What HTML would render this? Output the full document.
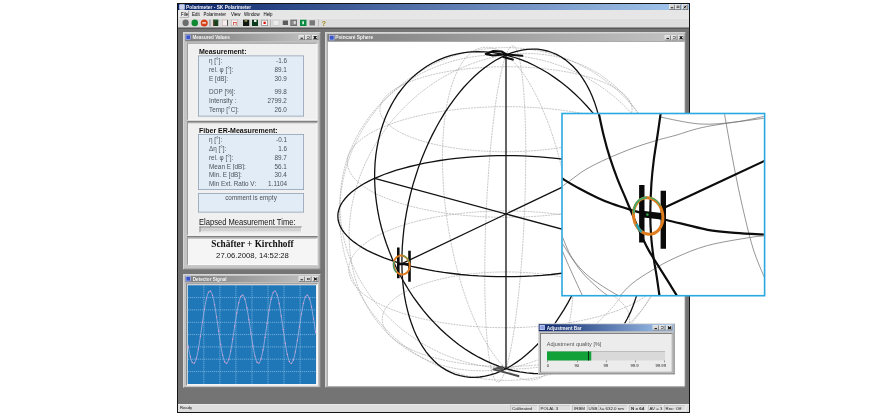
<!DOCTYPE html>
<html><head><meta charset="utf-8"><title>SK Polarimeter</title>
<style>
html,body{margin:0;padding:0;background:#fff;}
body{width:880px;height:420px;overflow:hidden;position:relative;font-family:"Liberation Sans",sans-serif;color:#222;}
#root{left:0;top:0;width:3520px;height:1680px;transform:scale(.25);transform-origin:0 0;filter:blur(1.2px);}
</style>
<style>
div{position:absolute;box-sizing:border-box;white-space:nowrap;}
svg{position:absolute;left:0;top:0;}
.win{background:#c4c4c4;border:3.2px solid #e2e2e2;border-right-color:#6c6c6c;border-bottom-color:#6c6c6c;}
.tb{height:28px;font-weight:bold;color:#f2f2f2;font-size:18.4px;line-height:28px;padding-left:36px;}
.tb.in{background:linear-gradient(90deg,#7d7d7d,#c4c4c4);}
.tb.ac{background:linear-gradient(90deg,#0b256b,#a5c9ef);}
.btn{top:4px;width:24px;height:20px;background:#d8d8d8;border:2px solid #f4f4f4;border-right-color:#444;border-bottom-color:#444;}
.btn::after{content:"";position:absolute;left:4.8px;top:3.2px;width:10.4px;height:8.8px;border:2.8px solid #222;box-sizing:border-box;}
.btn.mn::after{border:none;border-bottom:4px solid #222;top:6.4px;height:6.4px;}
.btn.cl::after{border:none;background:linear-gradient(45deg,transparent 35%,#222 36%,#222 64%,transparent 65%),linear-gradient(-45deg,transparent 35%,#222 36%,#222 64%,transparent 65%);width:12.8px;height:12px;left:3.6px;top:2px;}
.ico{left:8px;top:4px;width:20px;height:20px;background:#3b55c8;border:2px solid #dfe6ff;}
.panel{background:#f0f0f0;border:4px solid #9c9c9c;border-right-color:#fafafa;border-bottom-color:#fafafa;}
.box{background:#e2ecf6;border:3.2px solid #8d9db0;}
.h{font-weight:bold;font-size:32px;line-height:36px;color:#111;transform:scaleX(.875);transform-origin:0 50%;}
.r{left:836px;width:312px;height:36px;font-size:29.6px;line-height:36px;color:#4a5058;}
.r b{font-weight:normal;position:absolute;left:0;top:0;transform:scaleX(.86);transform-origin:0 50%;}
.r i{font-style:normal;position:absolute;right:0;top:0;transform:scaleX(.86);transform-origin:100% 50%;}
.m{top:42px;height:32px;font-size:18.8px;line-height:32px;color:#000;transform:scaleX(.94);transform-origin:0 50%;}
.t{top:76px;width:32px;height:32px;}
.s{top:1620px;height:24px;font-size:17.6px;line-height:24px;color:#1c1c1c;border:2px solid #b0b0b0;border-right-color:#fafafa;border-bottom-color:#fafafa;padding-left:4px;}
</style></head><body>
<!--ROOT--><div id="root">
<!-- main application window -->
<div style="left:708px;top:12px;width:2052px;height:1640px;background:#747474;border:4px solid #141414;"></div>
<div class="tb ac" style="left:712px;top:16px;width:2044px;height:24px;line-height:24px;font-size:19.2px;padding-left:32px;">Polarimeter - SK Polarimeter
 <div class="ico" style="left:6px;top:2px;width:20px;height:20px;background:#c8d0ee;"></div>
 <div class="btn mn" style="left:1964px;top:2px;"></div><div class="btn" style="left:1988px;top:2px;"></div><div class="btn cl" style="left:2016px;top:2px;"></div>
</div>
<div style="left:712px;top:40px;width:2044px;height:32px;background:#e6e6e6;"></div>
<div style="left:718.4px;top:41.6px;width:36px;height:28px;border:2px solid #f8f8f8;border-right-color:#666;border-bottom-color:#888;"></div><div class="m" style="left:724px;">File</div>
<div class="m" style="left:768px;">Edit</div>
<div class="m" style="left:814px;">Polarimeter</div>
<div class="m" style="left:924px;">View</div>
<div class="m" style="left:976px;">Window</div>
<div class="m" style="left:1054px;">Help</div>
<div style="left:712px;top:72px;width:2044px;height:40px;background:#dcdcdc;border-top:2px solid #f6f6f6;"></div>
<!-- toolbar icons -->
<div class="t" style="left:729.6px;top:78.4px;width:25.6px;height:25.6px;border-radius:50%;background:#6c6c6c;"></div>
<div class="t" style="left:766px;top:78.4px;width:26.4px;height:26.4px;border-radius:50%;background:#0f8a30;"></div>
<div class="t" style="left:802.8px;top:77.6px;width:28px;height:28px;border-radius:50%;background:#d8401c;"><div style="left:6.4px;top:10.4px;width:15.2px;height:7.2px;background:#f3c9b8;"></div></div>
<div style="left:838.4px;top:78px;width:3.2px;height:28px;background:#8a8a8a;"></div>
<div class="t" style="left:852px;top:79.2px;width:20.8px;height:24.8px;background:#17401f;border-left:5.2px solid #6a4a2a;border-top:4px solid #1e6a30;"></div>
<div class="t" style="left:888px;top:79.2px;width:24px;height:24.8px;background:#f6eeee;border:2.4px solid #b9a0a0;border-right:4px solid #555;"></div>
<div class="t" style="left:924.8px;top:79.2px;width:27.2px;height:24.8px;background:#f6f0f0;border:2.4px solid #b0a0a0;"><div style="left:4.8px;top:6.4px;width:14.4px;height:12px;border:3.2px solid #cc4030;border-bottom:none;"></div></div>
<div class="t" style="left:972px;top:79.2px;width:24.8px;height:24.8px;background:#10180f;"><div style="left:6.4px;top:0;width:10.4px;height:8px;background:#8a8a50;"></div></div>
<div class="t" style="left:1008px;top:79.2px;width:24px;height:24.8px;background:#0c3a1c;"><div style="left:8px;top:0;width:10.4px;height:8.8px;background:#e6efe6;"></div></div>
<div class="t" style="left:1045.2px;top:79.2px;width:26.4px;height:24.8px;background:#f8f2f2;border:3.6px solid #8a8a8a;"><div style="left:5.6px;top:4.8px;width:8.8px;height:8.8px;background:#e01010;"></div></div>
<div style="left:1081.2px;top:78px;width:2.8px;height:28px;background:#a6a6a6;"></div>
<div class="t" style="left:1091.2px;top:79.2px;width:25.6px;height:24px;background:#ececec;border:2.4px solid #b4b4b4;"></div>
<div class="t" style="left:1130.8px;top:82.4px;width:20.8px;height:17.6px;background:#5c5c5c;"></div>
<div class="t" style="left:1162.4px;top:79.2px;width:25.6px;height:24.8px;background:#8e8e8e;border:3.2px solid #6a6a6a;"><div style="left:9.6px;top:2.4px;width:8px;height:10.4px;background:#e6e6e6;"></div></div>
<div class="t" style="left:1200px;top:79.2px;width:26px;height:24.8px;background:#0a8a40;"><div style="left:8.8px;top:6px;width:7.2px;height:12px;background:#d4efdc;"></div></div>
<div class="t" style="left:1238.4px;top:80.8px;width:22px;height:20.8px;background:#777;"></div>
<div style="left:1272.8px;top:78px;width:2.8px;height:28px;background:#b0b0b0;"></div>
<div class="t" style="left:1286.4px;top:74.4px;width:20px;font-size:29.6px;line-height:36px;font-weight:bold;color:#a08c14;">?</div>
<div style="left:712px;top:110px;width:2044px;height:4.8px;background:#4e4e4e;"></div>
<!-- status bar -->
<div style="left:712px;top:1616px;width:2044px;height:32px;background:#dedede;border-top:2px solid #f8f8f8;"></div>
<div style="left:720px;top:1620px;font-size:16.8px;line-height:24px;color:#222;">Ready</div>
<div class="s" style="left:2042px;width:108px;">Calibrated</div>
<div class="s" style="left:2156px;width:128px;">POLAL 3</div>
<div class="s" style="left:2290px;width:52px;">IRBM</div>
<div class="s" style="left:2348px;width:40px;">USB</div>
<div class="s" style="left:2392px;width:120px;">λ= 632.0 nm</div>
<div class="s" style="left:2518px;width:68px;font-weight:bold;">N = 64</div>
<div class="s" style="left:2592px;width:60px;">AV = 3</div>
<div class="s" style="left:2656px;width:88px;">Rec: Off</div>

<!-- Measured Values window -->
<div class="win" style="left:732.8px;top:128.8px;width:549.6px;height:949.2px;"></div>
<div class="tb in" style="left:740.8px;top:136.4px;width:533.6px;height:28.4px;line-height:29.2px;padding-left:28.8px;">Measured Values
 <div class="ico" style="top:2.4px;left:2.4px;"></div>
 <div class="btn mn" style="left:454px;top:4px;"></div><div class="btn" style="left:480px;top:4px;"></div><div class="btn cl" style="left:508px;top:4px;"></div>
</div>
<div style="left:748px;top:170.8px;width:522.4px;height:891.2px;background:#808080;"></div>
<div class="panel" style="left:748px;top:170.8px;width:521.6px;height:310.8px;"></div>
<div class="panel" style="left:748px;top:488.8px;width:521.6px;height:454.4px;"></div>
<div class="panel" style="left:748px;top:950.4px;width:521.6px;height:110.4px;background:#f5f5f5;"></div>

<div class="h" style="left:796px;top:187.6px;">Measurement:</div>
<div class="box" style="left:792px;top:222px;width:424px;height:244px;"></div>
<div class="r" style="top:224.4px;"><b>η [°]:</b><i>-1.6</i></div>
<div class="r" style="top:260.8px;"><b>rel. φ [°]:</b><i>89.1</i></div>
<div class="r" style="top:296px;"><b>E [dB]:</b><i>30.9</i></div>
<div class="r" style="top:348.8px;"><b>DOP [%]:</b><i>99.8</i></div>
<div class="r" style="top:384.4px;"><b>Intensity :</b><i>2799.2</i></div>
<div class="r" style="top:420.4px;"><b>Temp [°C]:</b><i>26.0</i></div>

<div class="h" style="left:796px;top:503.6px;">Fiber ER-Measurement:</div>
<div class="box" style="left:792px;top:535.6px;width:424px;height:224.4px;"></div>
<div class="r" style="top:540.8px;"><b>η [°]:</b><i>-0.1</i></div>
<div class="r" style="top:575.6px;"><b>Δη [°]:</b><i>1.6</i></div>
<div class="r" style="top:610.8px;"><b>rel. φ [°]:</b><i>89.7</i></div>
<div class="r" style="top:645.6px;"><b>Mean E [dB]:</b><i>56.1</i></div>
<div class="r" style="top:680.8px;"><b>Min. E [dB]:</b><i>30.4</i></div>
<div class="r" style="top:715.6px;"><b>Min Ext. Ratio V:</b><i>1.1104</i></div>
<div class="box" style="left:792px;top:772px;width:424px;height:78px;"></div>
<div style="left:792px;top:771.2px;width:424px;text-align:center;font-size:29.6px;line-height:36px;color:#4a5058;transform:scaleX(.86);">comment is empty</div>
<div style="left:796px;top:869.2px;font-size:32.8px;line-height:36px;color:#111;transform:scaleX(.925);transform-origin:0 50%;">Elapsed Measurement Time:</div>
<div style="left:798px;top:906px;width:410px;height:24px;background:#d2d2d2;border:4px solid #8c8c8c;border-right-color:#f4f4f4;border-bottom-color:#f4f4f4;"></div>
<div style="left:752px;top:954.8px;width:516px;text-align:center;font-family:'Liberation Serif',serif;font-weight:bold;font-size:37.2px;line-height:44px;color:#111;">Schäfter + Kirchhoff</div>
<div style="left:752px;top:1004px;width:516px;text-align:center;font-size:30.8px;line-height:36px;color:#161616;">27.06.2008, 14:52:28</div>

<!-- Detector Signal window -->
<div class="win" style="left:732.8px;top:1096.8px;width:549.6px;height:455.2px;"></div>
<div class="tb in" style="left:740.8px;top:1104px;width:533.6px;height:25.2px;line-height:26px;padding-left:30.4px;">Detector Signal
 <div class="ico" style="top:1.2px;left:2.4px;"></div>
 <div class="btn mn" style="left:454px;top:2.4px;"></div><div class="btn" style="left:480px;top:2.4px;"></div><div class="btn cl" style="left:508px;top:2.4px;"></div>
</div>
<div style="left:744.8px;top:1134.4px;width:526.4px;height:408px;background:#f0f0f0;border:3.6px solid #6e6e6e;border-right-color:#fff;border-bottom-color:#fff;"></div>
<div style="left:751.2px;top:1141.2px;width:513.2px;height:394.4px;background:#1f77b8;"></div>

<!-- Poincare Sphere window -->
<div class="win" style="left:1300.8px;top:128.8px;width:1440.8px;height:1421.6px;"></div>
<div class="tb in" style="left:1308.8px;top:136px;width:1428.8px;height:28.8px;line-height:30.4px;font-size:19.2px;padding-left:32px;">Poincaré Sphere
 <div class="ico" style="top:4.8px;left:8px;"></div>
 <div class="btn mn" style="left:1350px;top:4.8px;"></div><div class="btn" style="left:1376px;top:4.8px;"></div><div class="btn cl" style="left:1404px;top:4.8px;"></div>
</div>
<div style="left:1309.6px;top:165.6px;width:1428.4px;height:1378.4px;background:#fff;border-left:2.4px solid #777;border-top:2.4px solid #777;"></div>

<svg width="3520" height="1680" viewBox="0 0 880 420">
<defs>
<clipPath id="pc"><rect x="328.5" y="42.5" width="356" height="343.5"/></clipPath>
<clipPath id="ic"><rect x="562.8" y="114.3" width="201" height="180.6"/></clipPath>
</defs>
<!-- detector grid + wave -->
<path d="M203.8 285.3 V383.9" stroke="#a4d0ee" stroke-width="0.7" stroke-dasharray="1 1"/><path d="M187.8 297.6 H316.1" stroke="#a4d0ee" stroke-width="0.7" stroke-dasharray="1 1"/><path d="M219.9 285.3 V383.9" stroke="#a4d0ee" stroke-width="0.7" stroke-dasharray="1 1"/><path d="M187.8 309.9 H316.1" stroke="#a4d0ee" stroke-width="0.7" stroke-dasharray="1 1"/><path d="M235.9 285.3 V383.9" stroke="#a4d0ee" stroke-width="0.7" stroke-dasharray="1 1"/><path d="M187.8 322.3 H316.1" stroke="#a4d0ee" stroke-width="0.7" stroke-dasharray="1 1"/><path d="M252.0 285.3 V383.9" stroke="#a4d0ee" stroke-width="0.7" stroke-dasharray="1 1"/><path d="M187.8 334.6 H316.1" stroke="#a4d0ee" stroke-width="0.7" stroke-dasharray="1 1"/><path d="M268.0 285.3 V383.9" stroke="#a4d0ee" stroke-width="0.7" stroke-dasharray="1 1"/><path d="M187.8 346.9 H316.1" stroke="#a4d0ee" stroke-width="0.7" stroke-dasharray="1 1"/><path d="M284.0 285.3 V383.9" stroke="#a4d0ee" stroke-width="0.7" stroke-dasharray="1 1"/><path d="M187.8 359.2 H316.1" stroke="#a4d0ee" stroke-width="0.7" stroke-dasharray="1 1"/><path d="M300.1 285.3 V383.9" stroke="#a4d0ee" stroke-width="0.7" stroke-dasharray="1 1"/><path d="M187.8 371.6 H316.1" stroke="#a4d0ee" stroke-width="0.7" stroke-dasharray="1 1"/>
<path d="M187.8 343.8 L188.3 346.8 L188.8 349.6 L189.3 352.2 L189.8 354.5 L190.3 356.7 L190.8 358.5 L191.3 360.1 L191.8 361.4 L192.3 362.4 L192.8 363.0 L193.3 363.4 L193.8 363.4 L194.3 363.0 L194.8 362.4 L195.3 361.4 L195.8 360.1 L196.3 358.5 L196.8 356.6 L197.3 354.5 L197.8 352.1 L198.3 349.4 L198.8 346.6 L199.3 343.6 L199.8 340.4 L200.3 337.1 L200.8 333.7 L201.3 330.3 L201.8 326.8 L202.3 323.3 L202.8 319.9 L203.3 316.5 L203.8 313.2 L204.3 310.1 L204.8 307.1 L205.3 304.3 L205.8 301.7 L206.3 299.4 L206.8 297.3 L207.3 295.4 L207.8 293.9 L208.3 292.7 L208.8 291.8 L209.3 291.2 L209.8 291.0 L210.3 291.1 L210.8 291.5 L211.3 292.3 L211.8 293.4 L212.3 294.8 L212.8 296.5 L213.3 298.5 L213.8 300.7 L214.3 303.2 L214.8 306.0 L215.3 308.9 L215.8 312.0 L216.3 315.2 L216.8 318.5 L217.3 321.9 L217.8 325.4 L218.3 328.9 L218.8 332.3 L219.3 335.8 L219.8 339.1 L220.3 342.3 L220.8 345.4 L221.3 348.3 L221.8 351.0 L222.3 353.5 L222.8 355.8 L223.3 357.8 L223.8 359.5 L224.3 360.9 L224.8 362.0 L225.3 362.8 L225.8 363.3 L226.3 363.4 L226.8 363.2 L227.3 362.7 L227.8 361.8 L228.3 360.7 L228.8 359.2 L229.3 357.4 L229.8 355.4 L230.3 353.1 L230.8 350.6 L231.3 347.9 L231.8 345.0 L232.3 342.0 L232.8 338.8 L233.3 335.6 L233.8 332.3 L234.3 328.9 L234.8 325.6 L235.3 322.3 L235.8 319.1 L236.3 315.9 L236.8 312.9 L237.3 310.1 L237.8 307.4 L238.3 304.9 L238.8 302.7 L239.3 300.7 L239.8 299.0 L240.3 297.6 L240.8 296.5 L241.3 295.7 L241.8 295.2 L242.3 295.0 L242.8 295.2 L243.3 295.7 L243.8 296.5 L244.3 297.6 L244.8 299.0 L245.3 300.7 L245.8 302.7 L246.3 304.9 L246.8 307.4 L247.3 310.1 L247.8 312.9 L248.3 315.9 L248.8 319.1 L249.3 322.3 L249.8 325.6 L250.3 328.9 L250.8 332.3 L251.3 335.6 L251.8 338.8 L252.3 342.0 L252.8 345.0 L253.3 347.9 L253.8 350.6 L254.3 353.1 L254.8 355.4 L255.3 357.4 L255.8 359.2 L256.3 360.7 L256.8 361.8 L257.3 362.7 L257.8 363.2 L258.3 363.4 L258.8 363.3 L259.3 362.8 L259.8 362.0 L260.3 360.9 L260.8 359.5 L261.3 357.8 L261.8 355.8 L262.3 353.5 L262.8 351.0 L263.3 348.3 L263.8 345.4 L264.3 342.3 L264.8 339.1 L265.3 335.8 L265.8 332.3 L266.3 328.9 L266.8 325.4 L267.3 321.9 L267.8 318.5 L268.3 315.2 L268.8 312.0 L269.3 308.9 L269.8 306.0 L270.3 303.2 L270.8 300.7 L271.3 298.5 L271.8 296.5 L272.3 294.8 L272.8 293.4 L273.3 292.3 L273.8 291.5 L274.3 291.1 L274.8 291.0 L275.3 291.2 L275.8 291.8 L276.3 292.7 L276.8 293.9 L277.3 295.4 L277.8 297.3 L278.3 299.4 L278.8 301.7 L279.3 304.3 L279.8 307.1 L280.3 310.1 L280.8 313.2 L281.3 316.5 L281.8 319.9 L282.3 323.3 L282.8 326.8 L283.3 330.3 L283.8 333.7 L284.3 337.1 L284.8 340.4 L285.3 343.6 L285.8 346.6 L286.3 349.4 L286.8 352.1 L287.3 354.5 L287.8 356.6 L288.3 358.5 L288.8 360.1 L289.3 361.4 L289.8 362.4 L290.3 363.0 L290.8 363.4 L291.3 363.4 L291.8 363.0 L292.3 362.4 L292.8 361.4 L293.3 360.1 L293.8 358.5 L294.3 356.7 L294.8 354.5 L295.3 352.2 L295.8 349.6 L296.3 346.8 L296.8 343.8 L297.3 340.8 L297.8 337.6 L298.3 334.3 L298.8 331.0 L299.3 327.6 L299.8 324.3 L300.3 321.0 L300.8 317.8 L301.3 314.7 L301.8 311.8 L302.3 309.0 L302.8 306.4 L303.3 304.0 L303.8 301.9 L304.3 300.0 L304.8 298.4 L305.3 297.1 L305.8 296.1 L306.3 295.4 L306.8 295.1 L307.3 295.0 L307.8 295.3 L308.3 295.9 L308.8 296.9 L309.3 298.1 L309.8 299.6 L310.3 301.5 L310.8 303.6 L311.3 305.9 L311.8 308.4 L312.3 311.2 L312.8 314.1 L313.3 317.2 L313.8 320.4 L314.3 323.6 L314.8 326.9 L315.3 330.3 L315.8 333.6" fill="none" stroke="#a9b2e2" stroke-width="0.8"/>
<circle cx="188.3" cy="346.8" r="0.7" fill="#e79ad0"/><circle cx="190.3" cy="356.7" r="0.7" fill="#e79ad0"/><circle cx="192.3" cy="362.4" r="0.7" fill="#e79ad0"/><circle cx="194.4" cy="363.0" r="0.7" fill="#e79ad0"/><circle cx="196.4" cy="358.2" r="0.7" fill="#e79ad0"/><circle cx="198.4" cy="348.9" r="0.7" fill="#e79ad0"/><circle cx="200.4" cy="336.3" r="0.7" fill="#e79ad0"/><circle cx="202.4" cy="322.3" r="0.7" fill="#e79ad0"/><circle cx="204.5" cy="309.1" r="0.7" fill="#e79ad0"/><circle cx="206.5" cy="298.6" r="0.7" fill="#e79ad0"/><circle cx="208.5" cy="292.3" r="0.7" fill="#e79ad0"/><circle cx="210.5" cy="291.3" r="0.7" fill="#e79ad0"/><circle cx="212.5" cy="295.6" r="0.7" fill="#e79ad0"/><circle cx="214.6" cy="304.6" r="0.7" fill="#e79ad0"/><circle cx="216.6" cy="317.0" r="0.7" fill="#e79ad0"/><circle cx="218.6" cy="331.0" r="0.7" fill="#e79ad0"/><circle cx="220.6" cy="344.3" r="0.7" fill="#e79ad0"/><circle cx="222.6" cy="355.1" r="0.7" fill="#e79ad0"/><circle cx="224.7" cy="361.8" r="0.7" fill="#e79ad0"/><circle cx="226.7" cy="363.3" r="0.7" fill="#e79ad0"/><circle cx="228.7" cy="359.5" r="0.7" fill="#e79ad0"/><circle cx="230.7" cy="351.1" r="0.7" fill="#e79ad0"/><circle cx="232.7" cy="339.2" r="0.7" fill="#e79ad0"/><circle cx="234.8" cy="325.9" r="0.7" fill="#e79ad0"/><circle cx="236.8" cy="313.0" r="0.7" fill="#e79ad0"/><circle cx="238.8" cy="302.7" r="0.7" fill="#e79ad0"/><circle cx="240.8" cy="296.4" r="0.7" fill="#e79ad0"/><circle cx="242.8" cy="295.2" r="0.7" fill="#e79ad0"/><circle cx="244.9" cy="299.2" r="0.7" fill="#e79ad0"/><circle cx="246.9" cy="307.8" r="0.7" fill="#e79ad0"/><circle cx="248.9" cy="319.7" r="0.7" fill="#e79ad0"/><circle cx="250.9" cy="333.1" r="0.7" fill="#e79ad0"/><circle cx="252.9" cy="345.9" r="0.7" fill="#e79ad0"/><circle cx="255.0" cy="356.1" r="0.7" fill="#e79ad0"/><circle cx="257.0" cy="362.2" r="0.7" fill="#e79ad0"/><circle cx="259.0" cy="363.1" r="0.7" fill="#e79ad0"/><circle cx="261.0" cy="358.8" r="0.7" fill="#e79ad0"/><circle cx="263.0" cy="349.8" r="0.7" fill="#e79ad0"/><circle cx="265.1" cy="337.4" r="0.7" fill="#e79ad0"/><circle cx="267.1" cy="323.4" r="0.7" fill="#e79ad0"/><circle cx="269.1" cy="310.1" r="0.7" fill="#e79ad0"/><circle cx="271.1" cy="299.3" r="0.7" fill="#e79ad0"/><circle cx="273.1" cy="292.6" r="0.7" fill="#e79ad0"/><circle cx="275.2" cy="291.1" r="0.7" fill="#e79ad0"/><circle cx="277.2" cy="295.1" r="0.7" fill="#e79ad0"/><circle cx="279.2" cy="303.8" r="0.7" fill="#e79ad0"/><circle cx="281.2" cy="316.0" r="0.7" fill="#e79ad0"/><circle cx="283.2" cy="329.8" r="0.7" fill="#e79ad0"/><circle cx="285.3" cy="343.3" r="0.7" fill="#e79ad0"/><circle cx="287.3" cy="354.4" r="0.7" fill="#e79ad0"/><circle cx="289.3" cy="361.4" r="0.7" fill="#e79ad0"/><circle cx="291.3" cy="363.4" r="0.7" fill="#e79ad0"/><circle cx="293.3" cy="360.0" r="0.7" fill="#e79ad0"/><circle cx="295.4" cy="351.9" r="0.7" fill="#e79ad0"/><circle cx="297.4" cy="340.3" r="0.7" fill="#e79ad0"/><circle cx="299.4" cy="326.9" r="0.7" fill="#e79ad0"/><circle cx="301.4" cy="314.0" r="0.7" fill="#e79ad0"/><circle cx="303.4" cy="303.4" r="0.7" fill="#e79ad0"/><circle cx="305.5" cy="296.7" r="0.7" fill="#e79ad0"/><circle cx="307.5" cy="295.1" r="0.7" fill="#e79ad0"/><circle cx="309.5" cy="298.7" r="0.7" fill="#e79ad0"/><circle cx="311.5" cy="307.0" r="0.7" fill="#e79ad0"/><circle cx="313.5" cy="318.7" r="0.7" fill="#e79ad0"/><circle cx="315.6" cy="332.0" r="0.7" fill="#e79ad0"/>
<!-- main sphere -->
<g clip-path="url(#pc)">
<circle cx="506.0" cy="214.0" r="166.4" fill="none" stroke="#9a9a9a" stroke-width="0.55" stroke-dasharray="2 0.8"/>
<path d="M506.0 366.5 L512.7 366.4 L519.3 366.2 L525.9 365.9 L532.4 365.4 L538.9 364.8 L545.2 364.1 L551.5 363.2 L557.6 362.2 L563.5 361.1 L569.3 359.8 L574.9 358.5 L580.3 357.0 L585.5 355.4 L590.5 353.8 L595.2 352.0 L599.6 350.1 L603.8 348.2 L607.7 346.2 L611.3 344.1 L614.6 341.9 L617.6 339.7 L620.3 337.4 L622.6 335.1 L624.7 332.7 L626.3 330.3 L627.7 327.8 L628.7 325.4 L629.4 322.9 L629.7 320.4 L629.7 318.0 L629.4 315.5 L628.7 313.0 L627.7 310.6 L626.4 308.2 L624.7 305.8 L622.7 303.5 L620.4 301.2 L617.8 298.9 L615.0 296.8 L611.8 294.6 L608.3 292.6 L604.6 290.6 L600.6 288.7 L596.4 286.9 L591.9 285.2 L587.2 283.5 L582.3 282.0 L577.2 280.5 L571.9 279.2 L566.5 278.0 L560.9 276.8 L555.1 275.8 L549.3 274.9 L543.3 274.1 L537.2 273.5 L531.1 272.9 L524.9 272.5 L518.6 272.2 L512.3 272.0 L506.0 271.9 L499.7 272.0 L493.4 272.2 L487.1 272.5 L480.9 272.9 L474.8 273.5 L468.7 274.1 L462.7 274.9 L456.9 275.8 L451.1 276.8 L445.5 278.0 L440.1 279.2 L434.8 280.5 L429.7 282.0 L424.8 283.5 L420.1 285.2 L415.6 286.9 L411.4 288.7 L407.4 290.6 L403.7 292.6 L400.2 294.6 L397.0 296.8 L394.2 298.9 L391.6 301.2 L389.3 303.5 L387.3 305.8 L385.6 308.2 L384.3 310.6 L383.3 313.0 L382.6 315.5 L382.3 318.0 L382.3 320.4 L382.6 322.9 L383.3 325.4 L384.3 327.8 L385.7 330.3 L387.3 332.7 L389.4 335.1 L391.7 337.4 L394.4 339.7 L397.4 341.9 L400.7 344.1 L404.3 346.2 L408.2 348.2 L412.4 350.1 L416.8 352.0 L421.5 353.8 L426.5 355.4 L431.7 357.0 L437.1 358.5 L442.7 359.8 L448.5 361.1 L454.4 362.2 L460.5 363.2 L466.8 364.1 L473.1 364.8 L479.6 365.4 L486.1 365.9 L492.7 366.2 L499.3 366.4 L506.0 366.5" fill="none" stroke="#9a9a9a" stroke-width="0.55" stroke-dasharray="2 0.8"/>
<path d="M506.0 151.8 L512.8 151.7 L519.5 151.5 L526.3 151.2 L532.9 150.8 L539.5 150.2 L546.0 149.6 L552.3 148.8 L558.6 147.9 L564.6 146.9 L570.5 145.8 L576.2 144.6 L581.7 143.3 L587.0 141.8 L592.1 140.3 L596.9 138.7 L601.4 137.1 L605.6 135.3 L609.6 133.5 L613.3 131.6 L616.6 129.6 L619.7 127.6 L622.4 125.6 L624.8 123.5 L626.9 121.3 L628.6 119.2 L630.0 117.0 L631.0 114.8 L631.7 112.6 L632.1 110.3 L632.0 108.1 L631.7 105.9 L631.0 103.7 L630.0 101.5 L628.6 99.3 L626.9 97.2 L624.9 95.1 L622.6 93.0 L619.9 91.0 L617.0 89.0 L613.7 87.1 L610.2 85.3 L606.4 83.5 L602.3 81.8 L598.0 80.2 L593.5 78.6 L588.7 77.1 L583.7 75.7 L578.5 74.4 L573.1 73.2 L567.6 72.1 L561.9 71.1 L556.0 70.2 L550.1 69.4 L544.0 68.7 L537.8 68.1 L531.5 67.6 L525.2 67.2 L518.8 66.9 L512.4 66.8 L506.0 66.7 L499.6 66.8 L493.2 66.9 L486.8 67.2 L480.5 67.6 L474.2 68.1 L468.0 68.7 L461.9 69.4 L456.0 70.2 L450.1 71.1 L444.4 72.1 L438.9 73.2 L433.5 74.4 L428.3 75.7 L423.3 77.1 L418.5 78.6 L414.0 80.2 L409.7 81.8 L405.6 83.5 L401.8 85.3 L398.3 87.1 L395.0 89.0 L392.1 91.0 L389.4 93.0 L387.1 95.1 L385.1 97.2 L383.4 99.3 L382.0 101.5 L381.0 103.7 L380.3 105.9 L380.0 108.1 L379.9 110.3 L380.3 112.6 L381.0 114.8 L382.0 117.0 L383.4 119.2 L385.1 121.3 L387.2 123.5 L389.6 125.6 L392.3 127.6 L395.4 129.6 L398.7 131.6 L402.4 133.5 L406.4 135.3 L410.6 137.1 L415.1 138.7 L419.9 140.3 L425.0 141.8 L430.3 143.3 L435.8 144.6 L441.5 145.8 L447.4 146.9 L453.4 147.9 L459.7 148.8 L466.0 149.6 L472.5 150.2 L479.1 150.8 L485.7 151.2 L492.5 151.5 L499.2 151.7 L506.0 151.8" fill="none" stroke="#9a9a9a" stroke-width="0.55" stroke-dasharray="2 0.8"/>
<path d="M506.0 327.7 L514.5 327.6 L523.0 327.4 L531.4 326.9 L539.8 326.4 L548.0 325.6 L556.2 324.7 L564.1 323.6 L571.9 322.3 L579.5 320.9 L586.9 319.4 L594.1 317.7 L601.0 315.9 L607.6 313.9 L613.9 311.8 L619.8 309.6 L625.5 307.3 L630.8 304.9 L635.7 302.3 L640.3 299.7 L644.4 297.0 L648.2 294.3 L651.6 291.4 L654.5 288.5 L657.0 285.6 L659.1 282.6 L660.8 279.6 L662.1 276.5 L662.9 273.5 L663.2 270.4 L663.2 267.4 L662.7 264.3 L661.8 261.3 L660.4 258.3 L658.7 255.3 L656.5 252.4 L654.0 249.5 L651.0 246.7 L647.7 244.0 L643.9 241.3 L639.9 238.7 L635.5 236.2 L630.7 233.8 L625.6 231.4 L620.2 229.2 L614.6 227.1 L608.6 225.1 L602.4 223.2 L596.0 221.4 L589.3 219.8 L582.4 218.3 L575.3 216.9 L568.0 215.7 L560.6 214.6 L553.1 213.6 L545.4 212.8 L537.6 212.1 L529.8 211.6 L521.9 211.2 L514.0 211.0 L506.0 210.9 L498.0 211.0 L490.1 211.2 L482.2 211.6 L474.4 212.1 L466.6 212.8 L458.9 213.6 L451.4 214.6 L444.0 215.7 L436.7 216.9 L429.6 218.3 L422.7 219.8 L416.0 221.4 L409.6 223.2 L403.4 225.1 L397.4 227.1 L391.8 229.2 L386.4 231.4 L381.3 233.8 L376.5 236.2 L372.1 238.7 L368.1 241.3 L364.3 244.0 L361.0 246.7 L358.0 249.5 L355.5 252.4 L353.3 255.3 L351.6 258.3 L350.2 261.3 L349.3 264.3 L348.8 267.4 L348.8 270.4 L349.1 273.5 L349.9 276.5 L351.2 279.6 L352.9 282.6 L355.0 285.6 L357.5 288.5 L360.4 291.4 L363.8 294.3 L367.6 297.0 L371.7 299.7 L376.3 302.3 L381.2 304.9 L386.5 307.3 L392.2 309.6 L398.1 311.8 L404.4 313.9 L411.0 315.9 L417.9 317.7 L425.1 319.4 L432.5 320.9 L440.1 322.3 L447.9 323.6 L455.8 324.7 L464.0 325.6 L472.2 326.4 L480.6 326.9 L489.0 327.4 L497.5 327.6 L506.0 327.7" fill="none" stroke="#9a9a9a" stroke-width="0.55" stroke-dasharray="2 0.8"/>
<path d="M506.0 217.3 L514.6 217.2 L523.2 217.0 L531.7 216.6 L540.1 216.0 L548.4 215.3 L556.7 214.4 L564.7 213.4 L572.6 212.2 L580.3 210.9 L587.7 209.4 L594.9 207.8 L601.9 206.1 L608.5 204.2 L614.9 202.2 L620.9 200.1 L626.6 197.9 L632.0 195.6 L637.0 193.3 L641.6 190.8 L645.8 188.2 L649.6 185.6 L653.0 182.9 L655.9 180.2 L658.5 177.4 L660.6 174.5 L662.3 171.7 L663.5 168.8 L664.4 165.9 L664.7 163.0 L664.7 160.1 L664.2 157.2 L663.2 154.4 L661.9 151.5 L660.1 148.7 L657.9 145.9 L655.3 143.2 L652.4 140.6 L649.0 137.9 L645.2 135.4 L641.1 132.9 L636.7 130.6 L631.9 128.3 L626.7 126.1 L621.3 124.0 L615.6 122.0 L609.6 120.1 L603.3 118.3 L596.8 116.6 L590.0 115.1 L583.1 113.6 L575.9 112.3 L568.6 111.1 L561.1 110.1 L553.5 109.2 L545.8 108.4 L537.9 107.8 L530.0 107.3 L522.0 106.9 L514.0 106.7 L506.0 106.7 L498.0 106.7 L490.0 106.9 L482.0 107.3 L474.1 107.8 L466.2 108.4 L458.5 109.2 L450.9 110.1 L443.4 111.1 L436.1 112.3 L428.9 113.6 L422.0 115.1 L415.2 116.6 L408.7 118.3 L402.4 120.1 L396.4 122.0 L390.7 124.0 L385.3 126.1 L380.1 128.3 L375.3 130.6 L370.9 132.9 L366.8 135.4 L363.0 137.9 L359.6 140.6 L356.7 143.2 L354.1 145.9 L351.9 148.7 L350.1 151.5 L348.8 154.4 L347.8 157.2 L347.3 160.1 L347.3 163.0 L347.6 165.9 L348.5 168.8 L349.7 171.7 L351.4 174.5 L353.5 177.4 L356.1 180.2 L359.0 182.9 L362.4 185.6 L366.2 188.2 L370.4 190.8 L375.0 193.3 L380.0 195.6 L385.4 197.9 L391.1 200.1 L397.1 202.2 L403.5 204.2 L410.1 206.1 L417.1 207.8 L424.3 209.4 L431.7 210.9 L439.4 212.2 L447.3 213.4 L455.3 214.4 L463.6 215.3 L471.9 216.0 L480.3 216.6 L488.8 217.0 L497.4 217.2 L506.0 217.3" fill="none" stroke="#9a9a9a" stroke-width="0.55" stroke-dasharray="2 0.8"/>
<path d="M506.0 368.7 L504.9 371.8 L503.9 374.6 L502.8 376.9 L501.8 378.8 L500.7 380.3 L499.7 381.3 L498.7 381.9 L497.7 382.0 L496.7 381.6 L495.7 380.8 L494.8 379.5 L493.8 377.7 L493.0 375.5 L492.1 372.8 L491.3 369.7 L490.5 366.1 L489.8 362.1 L489.1 357.7 L488.4 352.8 L487.8 347.5 L487.3 341.9 L486.8 335.9 L486.3 329.5 L485.9 322.7 L485.6 315.7 L485.3 308.3 L485.1 300.6 L484.9 292.7 L484.8 284.6 L484.8 276.2 L484.8 267.7 L484.9 258.9 L485.0 250.1 L485.2 241.1 L485.4 232.1 L485.8 222.9 L486.1 213.8 L486.6 204.7 L487.0 195.6 L487.6 186.5 L488.2 177.6 L488.8 168.7 L489.5 160.0 L490.2 151.4 L491.0 143.1 L491.8 134.9 L492.7 127.0 L493.6 119.4 L494.5 112.0 L495.4 105.0 L496.4 98.2 L497.4 91.9 L498.5 85.8 L499.5 80.2 L500.6 74.9 L501.7 70.1 L502.7 65.7 L503.8 61.7 L504.9 58.1 L506.0 55.0 L507.1 52.4 L508.2 50.1 L509.2 48.4 L510.3 47.1 L511.3 46.3 L512.3 46.0 L513.3 46.1 L514.3 46.7 L515.3 47.7 L516.2 49.2 L517.1 51.1 L517.9 53.4 L518.7 56.2 L519.5 59.4 L520.3 63.0 L521.0 67.0 L521.6 71.4 L522.2 76.1 L522.8 81.2 L523.3 86.7 L523.8 92.4 L524.2 98.5 L524.6 104.9 L524.9 111.5 L525.2 118.4 L525.4 125.5 L525.6 132.9 L525.7 140.4 L525.8 148.2 L525.8 156.1 L525.7 164.1 L525.6 172.3 L525.5 180.5 L525.3 188.9 L525.1 197.3 L524.8 205.7 L524.4 214.2 L524.0 222.6 L523.6 231.1 L523.1 239.5 L522.6 247.8 L522.0 256.1 L521.4 264.2 L520.7 272.3 L520.0 280.1 L519.3 287.9 L518.5 295.4 L517.7 302.7 L516.8 309.9 L515.9 316.7 L515.0 323.4 L514.1 329.7 L513.2 335.8 L512.2 341.5 L511.2 346.9 L510.2 352.0 L509.1 356.7 L508.1 361.1 L507.1 365.1 L506.0 368.7" fill="none" stroke="#9a9a9a" stroke-width="0.55" stroke-dasharray="2 0.8"/>
<path d="M506.0 368.7 L497.4 368.0 L488.8 367.0 L480.3 365.6 L471.8 363.7 L463.4 361.4 L455.2 358.8 L447.1 355.7 L439.1 352.3 L431.3 348.4 L423.8 344.3 L416.4 339.7 L409.3 334.9 L402.4 329.7 L395.8 324.1 L389.6 318.3 L383.6 312.2 L377.9 305.8 L372.6 299.2 L367.7 292.3 L363.1 285.3 L358.9 278.0 L355.1 270.5 L351.7 262.9 L348.7 255.1 L346.1 247.2 L344.0 239.2 L342.3 231.1 L341.1 223.0 L340.3 214.8 L339.9 206.7 L340.0 198.5 L340.6 190.4 L341.6 182.3 L343.1 174.2 L345.0 166.3 L347.3 158.5 L350.1 150.9 L353.4 143.4 L357.0 136.1 L361.1 129.0 L365.6 122.1 L370.4 115.4 L375.7 109.0 L381.3 102.9 L387.3 97.1 L393.6 91.6 L400.2 86.5 L407.1 81.7 L414.3 77.2 L421.8 73.1 L429.5 69.5 L437.4 66.2 L445.5 63.3 L453.8 60.8 L462.3 58.7 L470.9 57.1 L479.6 55.9 L488.3 55.2 L497.2 54.9 L506.0 55.0 L514.9 55.6 L523.7 56.6 L532.5 58.1 L541.2 59.9 L549.8 62.3 L558.3 65.0 L566.6 68.2 L574.8 71.7 L582.8 75.7 L590.6 80.0 L598.1 84.7 L605.4 89.8 L612.4 95.2 L619.1 100.9 L625.5 107.0 L631.5 113.3 L637.2 119.9 L642.5 126.8 L647.5 133.9 L652.0 141.2 L656.1 148.7 L659.9 156.4 L663.1 164.2 L666.0 172.2 L668.4 180.3 L670.3 188.4 L671.8 196.6 L672.8 204.9 L673.4 213.1 L673.5 221.4 L673.2 229.6 L672.4 237.8 L671.1 245.9 L669.4 253.9 L667.2 261.7 L664.6 269.5 L661.6 277.0 L658.1 284.4 L654.3 291.6 L650.0 298.5 L645.4 305.2 L640.3 311.7 L634.9 317.9 L629.2 323.7 L623.2 329.3 L616.8 334.6 L610.1 339.5 L603.2 344.1 L596.0 348.3 L588.6 352.1 L581.0 355.6 L573.1 358.7 L565.1 361.4 L556.9 363.6 L548.7 365.5 L540.2 367.0 L531.8 368.0 L523.2 368.7 L514.6 368.9 L506.0 368.7" fill="none" stroke="#9a9a9a" stroke-width="0.55" stroke-dasharray="2 0.8"/>
<path d="M506.0 368.7 L509.4 371.6 L512.8 374.1 L516.2 376.2 L519.6 377.9 L522.9 379.1 L526.2 379.8 L529.5 380.1 L532.7 380.0 L535.9 379.4 L539.0 378.4 L542.0 376.8 L544.9 374.9 L547.7 372.5 L550.5 369.6 L553.1 366.3 L555.6 362.5 L557.9 358.4 L560.1 353.8 L562.2 348.8 L564.1 343.4 L565.9 337.6 L567.5 331.5 L568.9 325.0 L570.2 318.2 L571.3 311.1 L572.2 303.7 L572.9 296.0 L573.4 288.0 L573.7 279.9 L573.9 271.5 L573.9 263.0 L573.6 254.3 L573.2 245.5 L572.6 236.6 L571.7 227.6 L570.8 218.6 L569.6 209.6 L568.2 200.6 L566.7 191.6 L565.0 182.7 L563.1 173.9 L561.0 165.2 L558.8 156.6 L556.5 148.2 L554.0 140.0 L551.4 132.1 L548.7 124.3 L545.8 116.9 L542.8 109.7 L539.8 102.9 L536.6 96.3 L533.4 90.2 L530.1 84.4 L526.8 78.9 L523.4 73.9 L519.9 69.3 L516.5 65.0 L513.0 61.3 L509.5 57.9 L506.0 55.0 L502.5 52.6 L499.1 50.6 L495.6 49.0 L492.3 48.0 L488.9 47.3 L485.6 47.2 L482.4 47.5 L479.3 48.3 L476.3 49.5 L473.3 51.1 L470.5 53.2 L467.7 55.7 L465.1 58.7 L462.6 62.0 L460.2 65.8 L457.9 69.9 L455.8 74.4 L453.8 79.3 L452.0 84.5 L450.3 90.1 L448.8 96.0 L447.4 102.1 L446.2 108.6 L445.2 115.3 L444.3 122.3 L443.6 129.5 L443.1 136.9 L442.7 144.4 L442.5 152.2 L442.4 160.1 L442.6 168.2 L442.9 176.3 L443.3 184.6 L443.9 192.9 L444.7 201.3 L445.7 209.7 L446.8 218.1 L448.1 226.5 L449.5 234.9 L451.1 243.2 L452.8 251.4 L454.7 259.6 L456.7 267.6 L458.8 275.5 L461.1 283.2 L463.4 290.8 L465.9 298.2 L468.5 305.4 L471.3 312.3 L474.1 319.0 L477.0 325.4 L480.0 331.6 L483.0 337.4 L486.2 342.9 L489.4 348.1 L492.6 353.0 L495.9 357.5 L499.3 361.6 L502.6 365.3 L506.0 368.7" fill="none" stroke="#9a9a9a" stroke-width="0.55" stroke-dasharray="2 0.8"/>
<path d="M506.0 368.7 L498.0 369.8 L490.0 370.5 L482.1 370.8 L474.2 370.6 L466.3 370.1 L458.6 369.1 L451.0 367.6 L443.5 365.8 L436.2 363.5 L429.0 360.9 L422.1 357.8 L415.3 354.3 L408.8 350.5 L402.6 346.2 L396.6 341.6 L390.9 336.6 L385.5 331.3 L380.5 325.6 L375.7 319.7 L371.3 313.4 L367.3 306.8 L363.7 300.0 L360.4 292.9 L357.5 285.6 L355.1 278.0 L353.0 270.3 L351.4 262.4 L350.2 254.4 L349.5 246.2 L349.1 238.0 L349.2 229.6 L349.8 221.2 L350.7 212.8 L352.1 204.3 L354.0 195.9 L356.3 187.5 L358.9 179.2 L362.0 171.0 L365.5 162.9 L369.4 154.9 L373.7 147.1 L378.4 139.5 L383.4 132.1 L388.7 124.9 L394.4 117.9 L400.4 111.3 L406.7 104.9 L413.3 98.8 L420.1 93.0 L427.2 87.6 L434.4 82.6 L441.9 77.9 L449.6 73.6 L457.4 69.7 L465.3 66.2 L473.3 63.1 L481.4 60.4 L489.6 58.2 L497.8 56.4 L506.0 55.0 L514.2 54.1 L522.4 53.6 L530.5 53.6 L538.5 54.0 L546.4 54.9 L554.2 56.2 L561.9 57.9 L569.4 60.1 L576.6 62.7 L583.7 65.7 L590.6 69.1 L597.2 72.8 L603.5 77.0 L609.6 81.6 L615.4 86.4 L620.8 91.7 L626.0 97.2 L630.7 103.1 L635.2 109.2 L639.3 115.7 L643.0 122.3 L646.3 129.3 L649.3 136.4 L651.8 143.7 L654.0 151.2 L655.7 158.9 L657.0 166.7 L658.0 174.6 L658.5 182.6 L658.6 190.7 L658.2 198.8 L657.5 207.0 L656.4 215.2 L654.9 223.3 L652.9 231.5 L650.6 239.5 L647.9 247.5 L644.8 255.4 L641.3 263.2 L637.5 270.9 L633.3 278.4 L628.8 285.7 L623.9 292.8 L618.7 299.7 L613.3 306.4 L607.5 312.8 L601.5 318.9 L595.2 324.8 L588.7 330.4 L581.9 335.7 L574.9 340.6 L567.8 345.2 L560.5 349.5 L553.0 353.4 L545.4 356.9 L537.6 360.1 L529.8 362.8 L521.9 365.2 L514.0 367.1 L506.0 368.7" fill="none" stroke="#9a9a9a" stroke-width="0.55" stroke-dasharray="2 0.8"/>
<path d="M506.0 368.7 L500.8 371.2 L495.5 373.3 L490.3 374.9 L485.1 376.2 L480.0 377.0 L474.9 377.3 L469.9 377.3 L464.9 376.7 L460.1 375.7 L455.3 374.3 L450.7 372.4 L446.2 370.1 L441.9 367.4 L437.7 364.2 L433.7 360.5 L429.9 356.5 L426.3 352.1 L422.9 347.2 L419.8 342.0 L416.8 336.4 L414.1 330.4 L411.7 324.1 L409.5 317.5 L407.6 310.6 L405.9 303.4 L404.5 295.9 L403.4 288.1 L402.6 280.2 L402.1 272.0 L401.9 263.7 L402.0 255.2 L402.3 246.6 L403.0 237.9 L403.9 229.1 L405.2 220.2 L406.7 211.4 L408.5 202.5 L410.6 193.7 L412.9 184.9 L415.6 176.2 L418.4 167.6 L421.5 159.2 L424.9 150.9 L428.5 142.8 L432.3 134.9 L436.3 127.2 L440.5 119.8 L444.8 112.7 L449.4 105.9 L454.1 99.3 L458.9 93.2 L463.8 87.3 L468.9 81.9 L474.0 76.8 L479.3 72.1 L484.6 67.8 L489.9 64.0 L495.2 60.5 L500.6 57.6 L506.0 55.0 L511.4 52.9 L516.7 51.3 L522.0 50.1 L527.2 49.3 L532.3 49.1 L537.4 49.2 L542.3 49.9 L547.2 51.0 L551.9 52.5 L556.4 54.4 L560.9 56.8 L565.1 59.6 L569.2 62.9 L573.1 66.5 L576.8 70.5 L580.3 74.9 L583.5 79.6 L586.6 84.7 L589.4 90.1 L592.1 95.9 L594.4 101.9 L596.5 108.3 L598.4 114.9 L600.0 121.7 L601.4 128.8 L602.5 136.1 L603.4 143.6 L603.9 151.3 L604.3 159.1 L604.3 167.1 L604.1 175.1 L603.7 183.3 L602.9 191.5 L602.0 199.8 L600.7 208.1 L599.3 216.5 L597.5 224.8 L595.6 233.1 L593.3 241.3 L590.9 249.5 L588.2 257.5 L585.3 265.5 L582.2 273.3 L578.9 281.0 L575.4 288.5 L571.7 295.8 L567.9 302.9 L563.8 309.8 L559.6 316.4 L555.3 322.8 L550.8 328.9 L546.2 334.7 L541.4 340.2 L536.6 345.3 L531.6 350.1 L526.6 354.6 L521.5 358.7 L516.4 362.4 L511.2 365.7 L506.0 368.7" fill="none" stroke="#111" stroke-width="1.3"/>
<path d="M506.0 368.7 L499.1 366.4 L492.2 363.7 L485.4 360.7 L478.6 357.2 L471.9 353.4 L465.3 349.2 L458.9 344.7 L452.6 339.8 L446.4 334.5 L440.4 329.0 L434.6 323.1 L428.9 317.0 L423.5 310.6 L418.4 304.0 L413.4 297.1 L408.7 290.0 L404.3 282.7 L400.1 275.2 L396.2 267.5 L392.7 259.7 L389.4 251.8 L386.4 243.8 L383.8 235.7 L381.4 227.5 L379.4 219.3 L377.8 211.1 L376.5 202.9 L375.5 194.7 L374.9 186.5 L374.6 178.4 L374.7 170.4 L375.1 162.5 L375.9 154.7 L377.1 147.0 L378.6 139.6 L380.4 132.3 L382.6 125.2 L385.1 118.3 L387.9 111.7 L391.1 105.4 L394.6 99.3 L398.4 93.5 L402.5 88.1 L406.9 82.9 L411.6 78.1 L416.6 73.7 L421.8 69.7 L427.2 66.0 L432.9 62.7 L438.8 59.8 L444.9 57.4 L451.2 55.3 L457.7 53.8 L464.3 52.6 L471.0 51.9 L477.8 51.6 L484.8 51.8 L491.8 52.4 L498.9 53.5 L506.0 55.0 L513.1 57.0 L520.3 59.4 L527.4 62.2 L534.4 65.5 L541.4 69.2 L548.3 73.3 L555.1 77.9 L561.8 82.8 L568.3 88.0 L574.7 93.7 L580.8 99.6 L586.8 106.0 L592.6 112.6 L598.1 119.5 L603.3 126.7 L608.3 134.1 L613.0 141.8 L617.4 149.6 L621.5 157.7 L625.3 165.9 L628.7 174.2 L631.8 182.7 L634.5 191.2 L636.9 199.8 L638.9 208.4 L640.5 217.1 L641.7 225.7 L642.6 234.3 L643.1 242.8 L643.2 251.2 L642.9 259.5 L642.2 267.6 L641.1 275.6 L639.7 283.4 L637.9 291.0 L635.7 298.4 L633.2 305.5 L630.4 312.4 L627.1 319.0 L623.6 325.2 L619.8 331.1 L615.6 336.7 L611.1 342.0 L606.4 346.9 L601.4 351.3 L596.2 355.5 L590.7 359.2 L585.0 362.5 L579.1 365.3 L573.0 367.8 L566.8 369.8 L560.4 371.4 L553.9 372.6 L547.2 373.3 L540.5 373.6 L533.7 373.5 L526.8 372.9 L519.9 371.9 L512.9 370.5 L506.0 368.7" fill="none" stroke="#111" stroke-width="1.3"/>
<path d="M506.0 276.7 L515.1 276.6 L524.2 276.3 L533.3 275.9 L542.2 275.3 L551.1 274.5 L559.8 273.5 L568.3 272.4 L576.7 271.1 L584.8 269.6 L592.7 268.0 L600.4 266.3 L607.7 264.4 L614.8 262.3 L621.5 260.1 L627.9 257.9 L633.9 255.4 L639.6 252.9 L644.9 250.3 L649.7 247.6 L654.2 244.8 L658.2 241.9 L661.8 239.0 L664.9 235.9 L667.6 232.9 L669.8 229.8 L671.6 226.7 L672.9 223.5 L673.8 220.3 L674.1 217.2 L674.0 214.0 L673.5 210.8 L672.5 207.7 L671.1 204.6 L669.2 201.5 L666.8 198.5 L664.1 195.5 L660.9 192.6 L657.3 189.8 L653.3 187.0 L649.0 184.3 L644.2 181.7 L639.2 179.2 L633.7 176.8 L628.0 174.5 L621.9 172.3 L615.5 170.2 L608.9 168.3 L602.0 166.5 L594.9 164.8 L587.5 163.2 L579.9 161.8 L572.2 160.5 L564.3 159.4 L556.2 158.4 L548.0 157.6 L539.8 156.9 L531.4 156.3 L523.0 155.9 L514.5 155.7 L506.0 155.6 L497.5 155.7 L489.0 155.9 L480.6 156.3 L472.2 156.9 L464.0 157.6 L455.8 158.4 L447.7 159.4 L439.8 160.5 L432.1 161.8 L424.5 163.2 L417.1 164.8 L410.0 166.5 L403.1 168.3 L396.5 170.2 L390.1 172.3 L384.0 174.5 L378.3 176.8 L372.8 179.2 L367.8 181.7 L363.0 184.3 L358.7 187.0 L354.7 189.8 L351.1 192.6 L347.9 195.5 L345.2 198.5 L342.8 201.5 L340.9 204.6 L339.5 207.7 L338.5 210.8 L337.9 214.0 L337.9 217.2 L338.2 220.3 L339.1 223.5 L340.4 226.7 L342.2 229.8 L344.4 232.9 L347.1 235.9 L350.2 239.0 L353.8 241.9 L357.8 244.8 L362.3 247.6 L367.1 250.3 L372.4 252.9 L378.1 255.4 L384.1 257.9 L390.5 260.1 L397.2 262.3 L404.3 264.4 L411.6 266.3 L419.3 268.0 L427.2 269.6 L435.3 271.1 L443.7 272.4 L452.2 273.5 L460.9 274.5 L469.8 275.3 L478.7 275.9 L487.8 276.3 L496.9 276.6 L506.0 276.7" fill="none" stroke="#111" stroke-width="1.3"/>
<path d="M506.0 55.0 L506.0 368.7" stroke="#111" stroke-width="1.3"/>
<path d="M401.9 263.7 L604.3 167.1" stroke="#111" stroke-width="1.3"/>
<path d="M374.6 178.4 L643.2 251.2" stroke="#111" stroke-width="1.3"/>
<!-- pole markers -->
<path d="M485.8 54 L493.4 51 L501.6 51.5 L506.4 54.3 L492.8 55.5 Z" fill="none" stroke="#0c0c0c" stroke-width="2.1" stroke-linejoin="round"/>
<path d="M506 54.4 L522.3 55.8 M503.4 57 L512.8 59.6" fill="none" stroke="#0c0c0c" stroke-width="2.1" stroke-linecap="round"/>
<path d="M493.4 369.4 L518.4 376" fill="none" stroke="#4c4c4c" stroke-width="2" stroke-linecap="round"/>
<path d="M492.6 368.6 L502.8 365.6 L503.6 370.4 Z" fill="#555"/>
<!-- H marker -->
<path d="M398.3 247.5 V278.3 M409.5 250.8 V281.7" stroke="#0c0c0c" stroke-width="2.6"/>
<path d="M398.3 264.2 H409.5" stroke="#0c0c0c" stroke-width="2.3"/>
<ellipse cx="401.7" cy="265" rx="8" ry="9.6" fill="none" stroke="#dd7a1c" stroke-width="1.9" transform="rotate(-12 401.7 265)"/>
<path d="M394.3 261 A8 9.6 0 0 0 396.5 272.5" fill="none" stroke="#3fa070" stroke-width="1.3"/>
<path d="M403 255.6 A8 9.6 0 0 1 409 262" fill="none" stroke="#4aa860" stroke-width="1"/>
</g>
<!-- inset -->
<rect x="562" y="113.5" width="202.6" height="182.2" fill="#fff" stroke="#2aa8e0" stroke-width="1.6"/>
<g clip-path="url(#ic)">
<path d="M560.0 188.0 C561.5 186.9 565.0 184.3 569.3 181.2 C573.6 178.1 579.6 173.1 586.0 169.3 C592.4 165.5 599.5 162.2 607.4 158.6 C615.3 155.0 625.3 151.0 633.6 147.9 C641.9 144.8 650.5 142.3 657.4 140.2 C664.3 138.1 666.6 137.8 675.0 135.5 C683.4 133.2 692.4 129.3 707.6 126.4 C722.8 123.5 756.3 119.4 766.0 118.0" fill="none" stroke="#7a7a7a" stroke-width="0.8"/>
<path d="M724.0 111.0 C725.2 117.9 728.6 137.7 731.4 152.6 C734.2 167.5 737.4 184.3 741.0 200.2 C744.6 216.1 748.9 234.8 752.9 247.9 C756.9 261.0 763.0 273.8 765.0 279.0" fill="none" stroke="#7a7a7a" stroke-width="0.8"/>
<path d="M618.0 298.0 C620.4 295.6 626.5 288.2 632.1 283.6 C637.7 279.1 644.2 275.0 651.4 270.7 C658.5 266.4 665.6 262.1 675.0 257.9 C684.4 253.7 695.0 248.9 707.6 245.5 C720.2 242.1 740.8 239.0 750.5 237.4 C760.2 235.8 763.4 236.2 766.0 236.0" fill="none" stroke="#7a7a7a" stroke-width="0.8"/>
<path d="M562.0 236.0 C563.7 239.7 567.9 251.4 572.1 257.9 C576.3 264.4 581.0 269.6 587.1 275.0 C593.2 280.4 602.6 286.2 608.6 290.0 C614.6 293.8 620.6 296.7 623.0 298.0" fill="none" stroke="#7a7a7a" stroke-width="0.8"/>
<path d="M562.0 250.0 C563.3 253.1 566.4 260.6 570.0 268.6 C573.6 276.6 581.2 293.1 583.5 298.0" fill="none" stroke="#7a7a7a" stroke-width="0.8"/>
<path d="M660.0 117.0 C666.7 118.2 687.5 123.2 700.0 124.0 C712.5 124.8 724.0 123.3 735.0 122.0 C746.0 120.7 760.8 117.0 766.0 116.0" fill="none" stroke="#7a7a7a" stroke-width="0.8"/>
<path d="M562.0 243.0 C565.1 247.6 574.7 263.2 580.7 270.7 C586.7 278.2 592.9 283.3 597.9 287.9 C602.9 292.4 608.8 296.3 611.0 298.0" fill="none" stroke="#7a7a7a" stroke-width="0.8"/>
<path d="M560.0 177.2 C563.1 179.0 572.5 184.9 578.8 188.3 C585.1 191.8 592.3 195.3 597.9 197.9 C603.5 200.5 606.8 201.9 612.1 203.8 C617.5 205.8 624.4 207.9 630.0 209.6 C635.6 211.3 639.4 212.3 645.5 214.0 C651.6 215.7 659.7 218.2 666.4 220.0 C673.1 221.8 678.8 223.0 685.7 224.6 C692.6 226.2 699.4 228.4 707.6 229.8 C715.8 231.2 725.3 232.0 735.0 232.8 C744.7 233.6 760.8 234.3 766.0 234.6" fill="none" stroke="#0d0d0d" stroke-width="2.2"/>
<path d="M598.3 111.0 C599.2 115.2 601.9 128.3 603.8 136.0 C605.7 143.7 607.5 150.3 609.8 157.4 C612.1 164.5 614.6 171.7 617.4 178.8 C620.2 185.9 623.4 193.1 626.4 200.2 C629.4 207.3 632.6 215.0 635.3 221.4 C638.0 227.8 640.5 233.5 642.8 238.5 C645.1 243.5 646.4 246.4 649.3 251.4 C652.2 256.4 656.4 262.9 660.0 268.6 C663.6 274.3 667.7 280.9 670.7 285.7 C673.7 290.5 676.8 295.5 678.0 297.5" fill="none" stroke="#0d0d0d" stroke-width="2.2"/>
<path d="M661.0 111.0 C660.4 115.2 658.6 127.9 657.4 136.0 C656.2 144.1 654.8 151.9 653.8 159.8 C652.8 167.7 652.0 174.8 651.4 183.6 C650.8 192.4 650.4 204.4 650.3 212.8 C650.2 221.2 650.5 226.7 651.0 234.2 C651.5 241.7 652.6 250.7 653.6 257.9 C654.6 265.0 655.8 270.4 656.8 277.1 C657.8 283.8 659.3 294.5 659.8 298.0" fill="none" stroke="#0d0d0d" stroke-width="2.2"/>
<path d="M662.0 208.7 C679.3 200.6 748.7 168.3 766.0 160.2" fill="none" stroke="#0d0d0d" stroke-width="2.2"/>

<path d="M641.8 185 V242.6 M663.3 190.8 V248.8" stroke="#0a0a0a" stroke-width="5.4"/>
<path d="M641.8 214 L663.3 216.5" stroke="#0a0a0a" stroke-width="6.4"/>
<ellipse cx="648.2" cy="216" rx="14.6" ry="18.4" fill="none" stroke="#de7c1e" stroke-width="3" transform="rotate(-10 648.2 216)"/>
<path d="M634.4 211 A14.6 18.4 -10 0 1 650 197.5" fill="none" stroke="#45a865" stroke-width="2" transform="rotate(-10 648.2 216)"/>
<path d="M650 197.6 A14.6 18.4 0 0 1 660.5 206" fill="none" stroke="#45a865" stroke-width="1.2"/>
<path d="M636.6 224 A14.6 18.4 0 0 0 641.6 232" fill="none" stroke="#28a0a8" stroke-width="2.6"/>
<circle cx="647.4" cy="214.6" r="1.3" fill="#2da04a"/>
</g>
</svg>

<!-- Adjustment Bar window -->
<div class="win" style="left:2152px;top:1294.4px;width:546.4px;height:202.4px;"></div>
<div class="tb ac" style="left:2155.2px;top:1296.8px;width:540px;height:28px;line-height:29.6px;font-size:18.8px;padding-left:31.6px;">Adjustment Bar
 <div class="ico" style="top:3.2px;left:4px;background:#8ea0e0;"></div>
 <div class="btn mn" style="left:456px;top:4px;"></div><div class="btn" style="left:482px;top:4px;"></div><div class="btn cl" style="left:510px;top:4px;"></div>
</div>
<div style="left:2160px;top:1332.4px;width:530.4px;height:157.6px;background:#ececec;border:3.6px solid #5e5e5e;border-right-color:#9a9a9a;border-bottom-color:#9a9a9a;"></div>
<div style="left:2186.8px;top:1357.6px;font-size:24px;line-height:32px;color:#555;transform:scaleX(.92);transform-origin:0 50%;">Adjustment quality [%]</div>
<div style="left:2188px;top:1404.8px;width:472px;height:36.8px;background:#d9d9d9;border-top:2.8px solid #9a9a9a;"></div>
<div style="left:2188px;top:1406.4px;width:177.2px;height:35.2px;background:#12a038;"></div>
<div style="left:2352px;top:1404.8px;width:4.4px;height:36.8px;background:#0a2a10;"></div>
<div style="left:2189.2px;top:1442.4px;width:2.4px;height:6.4px;background:#777;"></div><div style="left:2309.2px;top:1442.4px;width:2.4px;height:6.4px;background:#777;"></div><div style="left:2425.2px;top:1442.4px;width:2.4px;height:6.4px;background:#777;"></div><div style="left:2541.2px;top:1442.4px;width:2.4px;height:6.4px;background:#777;"></div><div style="left:2657.2px;top:1442.4px;width:2.4px;height:6.4px;background:#777;"></div>
<div style="left:2186.8px;top:1454px;font-size:16.8px;line-height:20px;color:#222;">0</div>
<div style="left:2298px;top:1454px;font-size:16.8px;line-height:20px;color:#222;">90</div>
<div style="left:2414px;top:1454px;font-size:16.8px;line-height:20px;color:#222;">99</div>
<div style="left:2522px;top:1454px;font-size:16.8px;line-height:20px;color:#222;">99.9</div>
<div style="left:2622px;top:1454px;font-size:16.8px;line-height:20px;color:#222;">99.99</div>
</div>
</body></html>
